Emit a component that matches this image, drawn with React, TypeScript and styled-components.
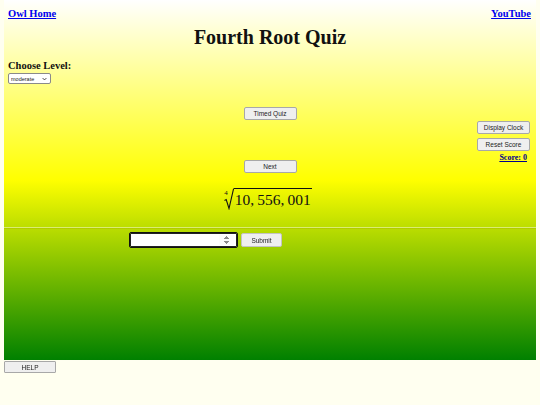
import styled, { createGlobalStyle } from 'styled-components';

const GlobalStyle = createGlobalStyle`
  html, body {
    margin: 0;
    padding: 0;
    background: #fffff0;
  }
  body {
    font-family: 'Liberation Serif', 'Times New Roman', serif;
  }
`;

const App = () => {
  return (
    <Page>
      <GlobalStyle />
      <QuizPanel>
        <TopBar>
          <NavLink href="#">Owl Home</NavLink>
          <NavLink href="#">YouTube</NavLink>
        </TopBar>
        <Title>Fourth Root Quiz</Title>

        <LevelBlock>
          <LevelLabel>Choose Level:</LevelLabel>
          <SelectWrap>
            <LevelSelect defaultValue="moderate">
              <option value="easy">easy</option>
              <option value="moderate">moderate</option>
              <option value="hard">hard</option>
            </LevelSelect>
            <Chevron viewBox="0 0 8 5">
              <path d="M1 1 L4 4 L7 1" fill="none" stroke="#222" strokeWidth="1.3" />
            </Chevron>
          </SelectWrap>
        </LevelBlock>

        <QuestionArea>
          <div />
          <CenterColumn>
            <QuizButton>Timed Quiz</QuizButton>
            <QuizButton $gap={40}>Next</QuizButton>
            <Radical>
              <RootIndex>4</RootIndex>
              <RootSign viewBox="0 0 10 22" preserveAspectRatio="none">
                <path d="M0.5 12.5 L2.2 11.6 L5 20.5 L9.6 0.5" fill="none" stroke="#111" strokeWidth="1.1" />
              </RootSign>
              <Radicand>10,&thinsp;556,&thinsp;001</Radicand>
            </Radical>
          </CenterColumn>
          <SideColumn>
            <QuizButton>Display Clock</QuizButton>
            <QuizButton $gap={4}>Reset Score</QuizButton>
            <ScoreLink href="#">Score: 0</ScoreLink>
          </SideColumn>
        </QuestionArea>

        <Divider />

        <AnswerRow>
          <AnswerInput type="number" autoFocus />
          <SubmitButton>Submit</SubmitButton>
        </AnswerRow>
      </QuizPanel>

      <HelpButton>HELP</HelpButton>
    </Page>
  );
};

export default App;

const Page = styled.div`
  width: 540px;
  height: 405px;
  padding: 0 4px;
  box-sizing: border-box;
  overflow: hidden;
`;

const QuizPanel = styled.div`
  height: 360px;
  display: flex;
  flex-direction: column;
  background: linear-gradient(to bottom, #ffffff 0%, #ffff00 50%, #008000 100%);
`;

const TopBar = styled.div`
  display: flex;
  justify-content: space-between;
  padding: 7px 5px 0 4px;
`;

const NavLink = styled.a`
  font-size: 10.5px;
  font-weight: bold;
  color: #0000ee;
  text-decoration: underline;
  line-height: 13px;
`;

const Title = styled.h1`
  margin: 5px 0 0;
  font-size: 20px;
  line-height: 24px;
  text-align: center;
  color: #111;
`;

const LevelBlock = styled.div`
  display: flex;
  flex-direction: column;
  align-items: flex-start;
  padding: 10px 0 0 4px;
`;

const LevelLabel = styled.div`
  font-size: 10.5px;
  font-weight: bold;
  line-height: 13px;
  color: #111;
`;

const SelectWrap = styled.div`
  position: relative;
  margin-top: 1px;
`;

const LevelSelect = styled.select`
  appearance: none;
  display: block;
  width: 43px;
  height: 11px;
  padding: 0 10px 0 2px;
  font-family: 'Liberation Sans', Arial, sans-serif;
  font-size: 5.5px;
  color: #222;
  border: 1px solid #8a8a8a;
  border-radius: 2px;
  background: #fff;
`;

const Chevron = styled.svg`
  position: absolute;
  right: 4px;
  top: 3.5px;
  width: 5px;
  height: 4px;
  pointer-events: none;
`;

const QuestionArea = styled.div`
  display: grid;
  grid-template-columns: 1fr auto 1fr;
  margin-top: 23px;
`;

const CenterColumn = styled.div`
  display: flex;
  flex-direction: column;
  align-items: center;
`;

const SideColumn = styled.div`
  display: flex;
  flex-direction: column;
  align-items: flex-end;
  padding: 14px 6px 0 0;
`;

const QuizButton = styled.button<{ $gap?: number }>`
  width: 53px;
  height: 13px;
  margin-top: ${p => p.$gap ?? 0}px;
  padding: 0;
  font-family: 'Liberation Sans', Arial, sans-serif;
  font-size: 6.5px;
  color: #222;
  background: #efefef;
  border: 1px solid #a8a8a8;
  border-radius: 2px;
`;

const ScoreLink = styled.a`
  margin-top: 2px;
  margin-right: 3px;
  font-size: 8px;
  font-weight: bold;
  color: #00008b;
  text-decoration: underline;
`;

const Radical = styled.div`
  display: flex;
  align-items: flex-end;
  margin-top: 15px;
  margin-left: -4px;
  color: #111;
`;

const RootIndex = styled.span`
  align-self: flex-start;
  font-size: 7px;
  line-height: 7px;
  margin-right: -4px;
  margin-top: 2px;
`;

const RootSign = styled.svg`
  width: 10px;
  height: 22px;
  display: block;
`;

const Radicand = styled.span`
  border-top: 1px solid #111;
  padding: 1px 1px 0 1px;
  font-size: 15.5px;
  line-height: 20px;
`;

const Divider = styled.hr`
  margin: 17px 0 0;
  border: none;
  border-top: 1px solid rgba(255, 255, 255, 0.45);
  border-bottom: 1px solid rgba(160, 170, 0, 0.35);
`;

const AnswerRow = styled.div`
  display: flex;
  align-items: center;
  gap: 4px;
  padding: 4px 0 0 126px;
`;

const AnswerInput = styled.input`
  width: 107px;
  height: 14px;
  box-sizing: border-box;
  padding: 0 2px;
  font-size: 8px;
  background: #fff;
  border: 1px solid #222;
  outline: 1px solid #111;
  border-radius: 1px;

  &::-webkit-inner-spin-button {
    opacity: 1;
    height: 10px;
  }
`;

const SubmitButton = styled.button`
  width: 41px;
  height: 14px;
  padding: 0;
  font-family: 'Liberation Sans', Arial, sans-serif;
  font-size: 6.5px;
  color: #222;
  background: #efefef;
  border: 1px solid #c4c4c4;
  border-radius: 2px;
`;

const HelpButton = styled.button`
  display: block;
  margin-top: 1px;
  width: 52px;
  height: 12px;
  padding: 0;
  font-family: 'Liberation Sans', Arial, sans-serif;
  font-size: 6.5px;
  color: #222;
  background: #efefef;
  border: 1px solid #a8a8a8;
  border-radius: 1px;
`;
